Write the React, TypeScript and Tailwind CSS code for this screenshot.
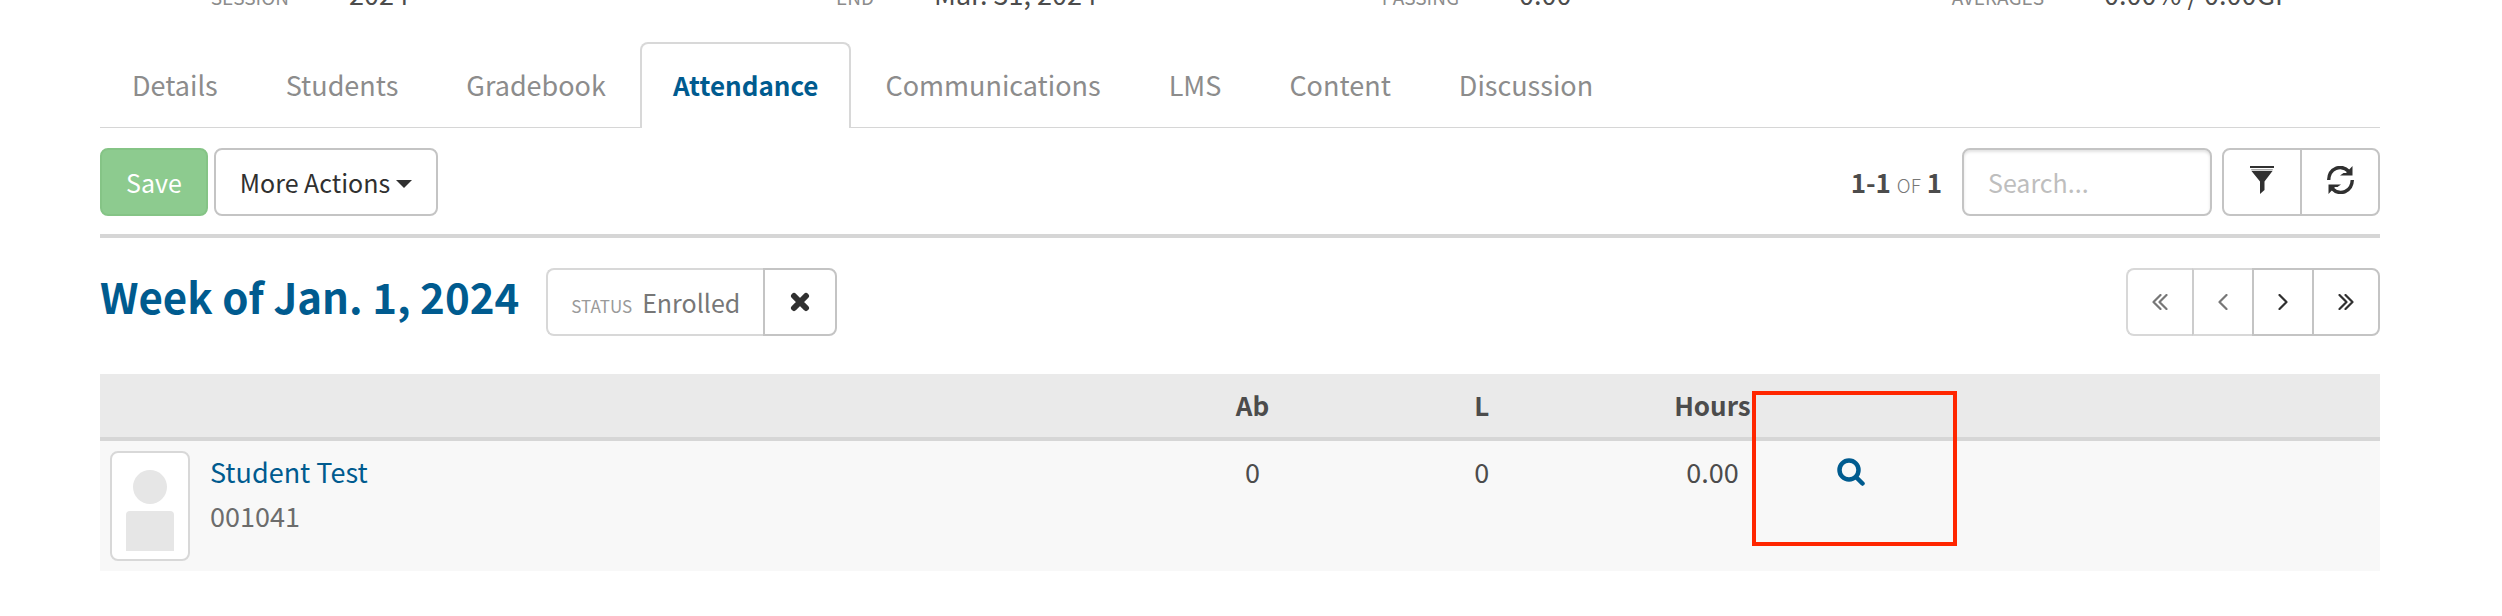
import React from "react";

const LINE = "border-[#c4c4c4]";

const tabs = ["Details", "Students", "Gradebook", "Attendance", "Communications", "LMS", "Content", "Discussion"];

function Chevrons({ dir, double }: { dir: "left" | "right"; double?: boolean }) {
  const w = double ? 16 : 10;
  return (
    <svg width={w} height="16" viewBox={`0 0 ${w} 16`} fill="none" stroke="currentColor" strokeWidth="2.2" strokeLinecap="round" strokeLinejoin="round" aria-hidden="true" className={dir === "left" ? "rotate-180" : ""}>
      <path d="M1.5 1L8.5 8L1.5 15" />
      {double && <path d="M7.5 1L14.5 8L7.5 15" />}
    </svg>
  );
}

function Fact({ label, value }: { label: string; value: string }) {
  return (
    <div className="flex items-baseline gap-[60px] whitespace-nowrap">
      <dt className="w-[189px] text-right text-[19px] text-[#8c8c8c]">{label}</dt>
      <dd className="text-[27px] text-[#4c4c4c]">{value}</dd>
    </div>
  );
}

export default function App() {
  return (
    <main className="h-fit overflow-hidden bg-white pr-[122px] pl-[100px] font-['Noto_Sans_CJK_SC',sans-serif] text-[25px] leading-[44px] text-[#4c4c4c]">
      <dl className="-mt-[28px] -mr-[60px] grid h-[70px] grid-cols-4">
        <Fact label="SESSION" value="2024" />
        <Fact label="END" value="Mar. 31, 2024" />
        <Fact label="PASSING" value="0.00" />
        <Fact label="AVERAGES" value="0.00% / 0.00GP" />
      </dl>

      <nav className="flex h-[86px] border-b border-[#d6d6d6]">
        {tabs.map((t) =>
          t === "Attendance" ? (
            <a key={t} href="#attendance" aria-current="page" className="-mb-px rounded-t-lg border-2 border-b-0 border-[#d8d8d8] bg-white px-[31px] pt-[19px] text-[26px] font-bold text-[#005b8f]">{t}</a>
          ) : (
            <a key={t} href={`#${t.toLowerCase()}`} className="px-[34px] pt-[21px] text-[27px] text-[#8c8c8c] first:pl-[32px]">{t}</a>
          )
        )}
      </nav>

      <div className="flex items-center justify-between border-b-4 border-[#d6d6d6] pt-[20px] pb-[18px]">
        <div className="flex gap-[6px]">
          <button type="button" className="h-[68px] rounded-lg border-2 border-[#85c486] bg-[#8dcb8f] px-[24px] text-white">Save</button>
          <button type="button" className={`flex h-[68px] items-center gap-[6px] rounded-lg border-2 ${LINE} px-[24px] text-[#303030]`}>
            More Actions
            <svg width="16" height="8" viewBox="0 0 16 8" fill="currentColor" className="mt-[4px]" aria-hidden="true"><path d="M0 0H16L8 8Z" /></svg>
          </button>
        </div>
        <div className="flex items-center">
          <p className="mr-[20px] pt-[2px] text-[26px] font-bold">1-1 <span className="text-[19px] font-light text-[#777]">OF</span> 1</p>
          <input type="text" aria-label="Search" placeholder="Search..." className={`mr-[10px] h-[68px] w-[250px] rounded-lg border-2 ${LINE} px-[24px] shadow-[inset_0_2px_3px_#e2e2e2] placeholder:text-[#bebebe]`} />
          <div className={`flex h-[68px] rounded-lg border-2 ${LINE} text-[#303030]`}>
            <button type="button" aria-label="Filter" className={`flex w-[78px] items-center justify-center border-r-2 ${LINE}`}>
              <svg width="24" height="28" viewBox="0 0 24 28" fill="currentColor" className="mb-[4px]" aria-hidden="true">
                <path d="M0 0H24V2H0Z" /><path d="M1 3H23L22.500 4.500H1.500Z" opacity=".4" /><path d="M1.500 5H22.500L14.500 15.500V24L10 28V15.500Z" />
              </svg>
            </button>
            <button type="button" aria-label="Refresh" className="flex w-[76px] items-center justify-center">
              <svg width="27" height="28" viewBox="0 0 27 28" fill="none" stroke="currentColor" strokeWidth="3.400" className="mb-[4px]" aria-hidden="true">
                <path d="M1.700 14C2 2.500 14-2.500 22 5.500M25.300 14C25 25.500 13 30.500 5 22.500" /><path d="M25.500 0V9.500H13L16.500 7H19ZM1.500 28V18.500H14L10.500 21H8Z" fill="currentColor" stroke="none" />
              </svg>
            </button>
          </div>
        </div>
      </div>

      <div className="flex items-center justify-between pt-[30px] pb-[38px]">
        <div className="flex items-center gap-[27px]">
          <h1 className="pb-[12px] text-[42px] font-bold text-[#005b8f]">Week of Jan. 1, 2024</h1>
          <div className="flex h-[68px] text-[#777]">
            <p className="rounded-l-lg border-2 border-r-0 border-[#d8d8d8] px-[23px] leading-[64px]"><span className="mr-[10px] text-[17px] text-[#9a9a9a]">STATUS</span>Enrolled</p>
            <button type="button" aria-label="Remove status filter" className={`flex w-[74px] items-center justify-center rounded-r-lg border-2 ${LINE} text-[#303030]`}>
              <svg width="20" height="20" viewBox="0 0 20 20" stroke="currentColor" strokeWidth="6" strokeLinecap="round" aria-hidden="true"><path d="M4 4L16 16M16 4L4 16" /></svg>
            </button>
          </div>
        </div>
        <div className="flex h-[68px] text-[#777]">
          <button type="button" disabled aria-label="First week" className="flex w-[66px] items-center justify-center rounded-l-lg border-2 border-r-0 border-[#d8d8d8]"><Chevrons dir="left" double /></button>
          <button type="button" disabled aria-label="Previous week" className="flex w-[60px] items-center justify-center border-2 border-r-0 border-[#d8d8d8] border-l-[#cccccc]"><Chevrons dir="left" /></button>
          <button type="button" aria-label="Next week" className={`flex w-[60px] items-center justify-center border-2 border-r-0 ${LINE} text-[#303030]`}><Chevrons dir="right" /></button>
          <button type="button" aria-label="Last week" className={`flex w-[68px] items-center justify-center rounded-r-lg border-2 ${LINE} text-[#303030]`}><Chevrons dir="right" double /></button>
        </div>
      </div>

      <table className="w-full table-fixed border-separate border-spacing-0">
        <colgroup>
          <col className="w-[45.5%]" /><col className="w-[10.1%]" /><col className="w-[10%]" /><col className="w-[6.8%]" /><col className="w-[9.1%]" /><col />
        </colgroup>
        <thead>
          <tr className="h-[67px] bg-[#eaeaea] text-[26px] *:border-b-4 *:border-[#d6d6d6] *:pb-[2px]">
            <th aria-label="Student" /><th>Ab</th><th>L</th><th className="text-right">Hours</th><th aria-label="View" /><th aria-label="Notes" />
          </tr>
        </thead>
        <tbody>
          <tr className="h-[130px] bg-[#f8f8f8] align-top text-[27px] *:pt-[9px]">
            <td>
              <div className="flex pl-[10px]">
                <span className="mt-px mr-[20px] block h-[110px] w-[80px] rounded-lg border-2 border-[#d8d8d8] bg-white">
                  <svg width="76" height="106" viewBox="0 0 76 106" fill="#e6e6e6" aria-hidden="true"><circle cx="38" cy="34" r="17" /><path d="M14 62Q14 58 18 58H58Q62 58 62 62V98H14Z" /></svg>
                </span>
                <span><a href="#student" className="block text-[#005b8f]">Student Test</a><span className="block text-[#6c6c6c]">001041</span></span>
              </div>
            </td>
            <td className="text-center">0</td>
            <td className="text-center">0</td>
            <td className="pr-[12px] text-right">0.00</td>
            <td className="relative pr-[6px] text-center">
              <button type="button" aria-label="View attendance" className="inline-flex h-[44px] items-center align-top text-[#005b8f]">
                <svg width="28" height="28" viewBox="0 0 28 28" fill="none" stroke="currentColor" strokeWidth="4.500" strokeLinecap="round" aria-hidden="true"><circle cx="12" cy="12" r="9.500" /><path d="M19 19L25.500 25.500" /></svg>
              </button>
              <span className="pointer-events-none absolute -top-[50px] right-px left-px h-[155px] border-4 border-[#ff2600]" />
            </td>
            <td />
          </tr>
        </tbody>
      </table>
    </main>
  );
}
